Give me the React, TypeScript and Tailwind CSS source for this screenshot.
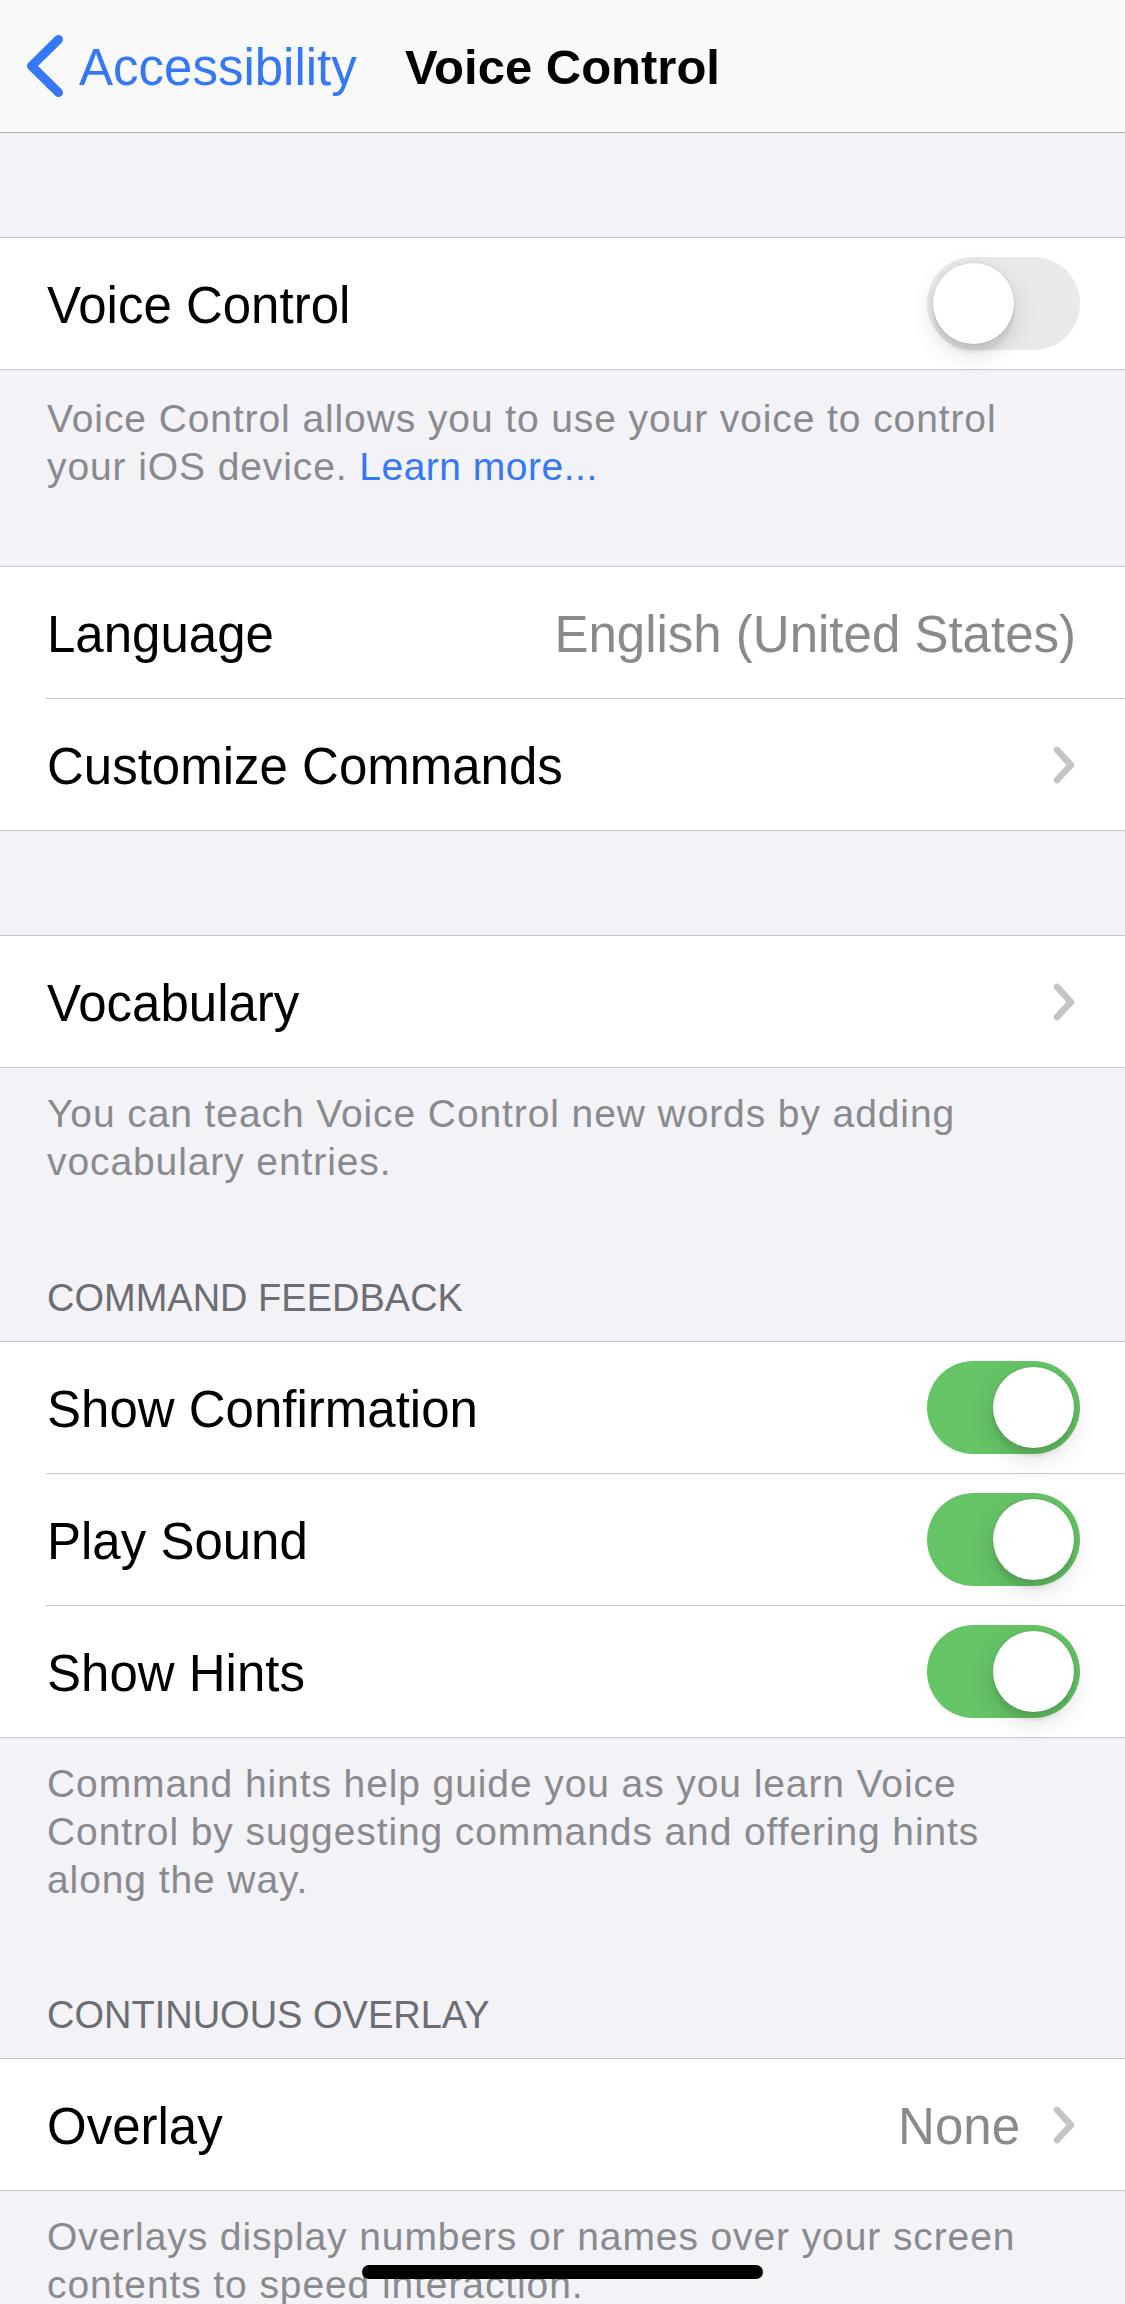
import React from "react";

const FONT = { fontFamily: '"Liberation Sans", Arial, sans-serif' };

function Toggle({ on }: { on: boolean }) {
  return (
    <div
      className={
        on
          ? "w-[153px] h-[93px] rounded-full bg-[#65c466] flex items-center justify-end px-[6px] shrink-0"
          : "w-[153px] h-[93px] rounded-full bg-[#e9e9ea] flex items-center justify-start px-[6px] shrink-0"
      }
    >
      <div className="w-[81px] h-[81px] rounded-full bg-white shadow-[0_9px_24px_rgba(0,0,0,0.15),0_9px_3px_rgba(0,0,0,0.06),0_0_0_1.5px_rgba(0,0,0,0.04)]" />
    </div>
  );
}

function Chevron() {
  return (
    <svg width="28" height="44" viewBox="0 0 28 44" className="shrink-0">
      <path
        d="M7 7 L21 22 L7 37"
        fill="none"
        stroke="#c4c4c7"
        strokeWidth="6.5"
        strokeLinecap="round"
        strokeLinejoin="round"
      />
    </svg>
  );
}

function Row({ children }: { children: React.ReactNode }) {
  return (
    <div className="h-[131px] flex items-center pl-[47px] text-[51px] leading-[61px] text-black">
      {children}
    </div>
  );
}

function Label({ children }: { children: React.ReactNode }) {
  return <span className="flex-1 pt-[3px]">{children}</span>;
}

function Sep() {
  return <div className="ml-[46px] h-px bg-[#c8c7cc]" />;
}

function Group({ children }: { children: React.ReactNode }) {
  return <div className="bg-white border-y border-[#c8c7cc]">{children}</div>;
}

function Footer({ children, className }: { children: React.ReactNode; className: string }) {
  return (
    <div
      className={
        "px-[47px] text-[39px] leading-[48px] tracking-[0.9px] text-[#8a8a8e] " + className
      }
    >
      {children}
    </div>
  );
}

function Header({ children, className }: { children: React.ReactNode; className: string }) {
  return (
    <div className={"px-[47px] text-[38px] leading-[48px] text-[#6d6d72] " + className}>
      {children}
    </div>
  );
}

export default function App() {
  return (
    <div
      className="relative w-[1125px] h-[2304px] overflow-hidden bg-[#f2f2f7]"
      style={FONT}
    >
      {/* Nav bar */}
      <div className="h-[133px] bg-[#f9f9fa] border-b border-[#b1b1b4] grid grid-cols-[1fr_auto_1fr] items-center">
        <div className="flex items-center pl-[22px]">
          <svg width="46" height="72" viewBox="0 0 46 72" className="shrink-0">
            <path
              d="M36.5 9.5 L9.5 36 L36.5 62.5"
              fill="none"
              stroke="#3478f6"
              strokeWidth="9"
              strokeLinecap="round"
              strokeLinejoin="round"
            />
          </svg>
          <span className="ml-[11px] pt-[2px] text-[51px] leading-[61px] text-[#3478f6]">
            Accessibility
          </span>
        </div>
        <div className="pt-[2px] text-[49px] leading-[61px] font-bold text-black">
          Voice Control
        </div>
        <div />
      </div>

      <div className="h-[104px]" />

      <Group>
        <Row>
          <Label>Voice Control</Label>
          <div className="pr-[45px]">
            <Toggle on={false} />
          </div>
        </Row>
      </Group>

      <Footer className="pt-[25px] pb-[75px]">
        Voice Control allows you to use your voice to control your iOS device.{" "}
        <span className="text-[#3478f6] tracking-[0.5px]">Learn more...</span>
      </Footer>

      <Group>
        <Row>
          <Label>Language</Label>
          <span className="pr-[49px] pt-[3px] text-[#8a8a8e]">English (United States)</span>
        </Row>
        <Sep />
        <Row>
          <Label>Customize Commands</Label>
          <div className="pr-[47px] flex items-center">
            <Chevron />
          </div>
        </Row>
      </Group>

      <div className="h-[104px]" />

      <Group>
        <Row>
          <Label>Vocabulary</Label>
          <div className="pr-[47px] flex items-center">
            <Chevron />
          </div>
        </Row>
      </Group>

      <Footer className="pt-[22px]">
        You can teach Voice Control new words by adding vocabulary entries.
      </Footer>

      <Header className="pt-[88px] pb-[19px]">COMMAND FEEDBACK</Header>

      <Group>
        <Row>
          <Label>Show Confirmation</Label>
          <div className="pr-[45px]">
            <Toggle on={true} />
          </div>
        </Row>
        <Sep />
        <Row>
          <Label>Play Sound</Label>
          <div className="pr-[45px]">
            <Toggle on={true} />
          </div>
        </Row>
        <Sep />
        <Row>
          <Label>Show Hints</Label>
          <div className="pr-[45px]">
            <Toggle on={true} />
          </div>
        </Row>
      </Group>

      <Footer className="pt-[22px]">
        Command hints help guide you as you learn Voice Control by suggesting commands and
        offering hints along the way.
      </Footer>

      <Header className="pt-[87px] pb-[19px]">CONTINUOUS OVERLAY</Header>

      <Group>
        <Row>
          <Label>Overlay</Label>
          <span className="text-[#8a8a8e] mr-[30px] pt-[3px]">None</span>
          <div className="pr-[47px] flex items-center">
            <Chevron />
          </div>
        </Row>
      </Group>

      <Footer className="pt-[22px]">
        Overlays display numbers or names over your screen contents to speed interaction.
      </Footer>

      {/* Home indicator */}
      <div className="absolute left-[362px] top-[2265px] w-[401px] h-[14px] rounded-full bg-black" />
    </div>
  );
}
